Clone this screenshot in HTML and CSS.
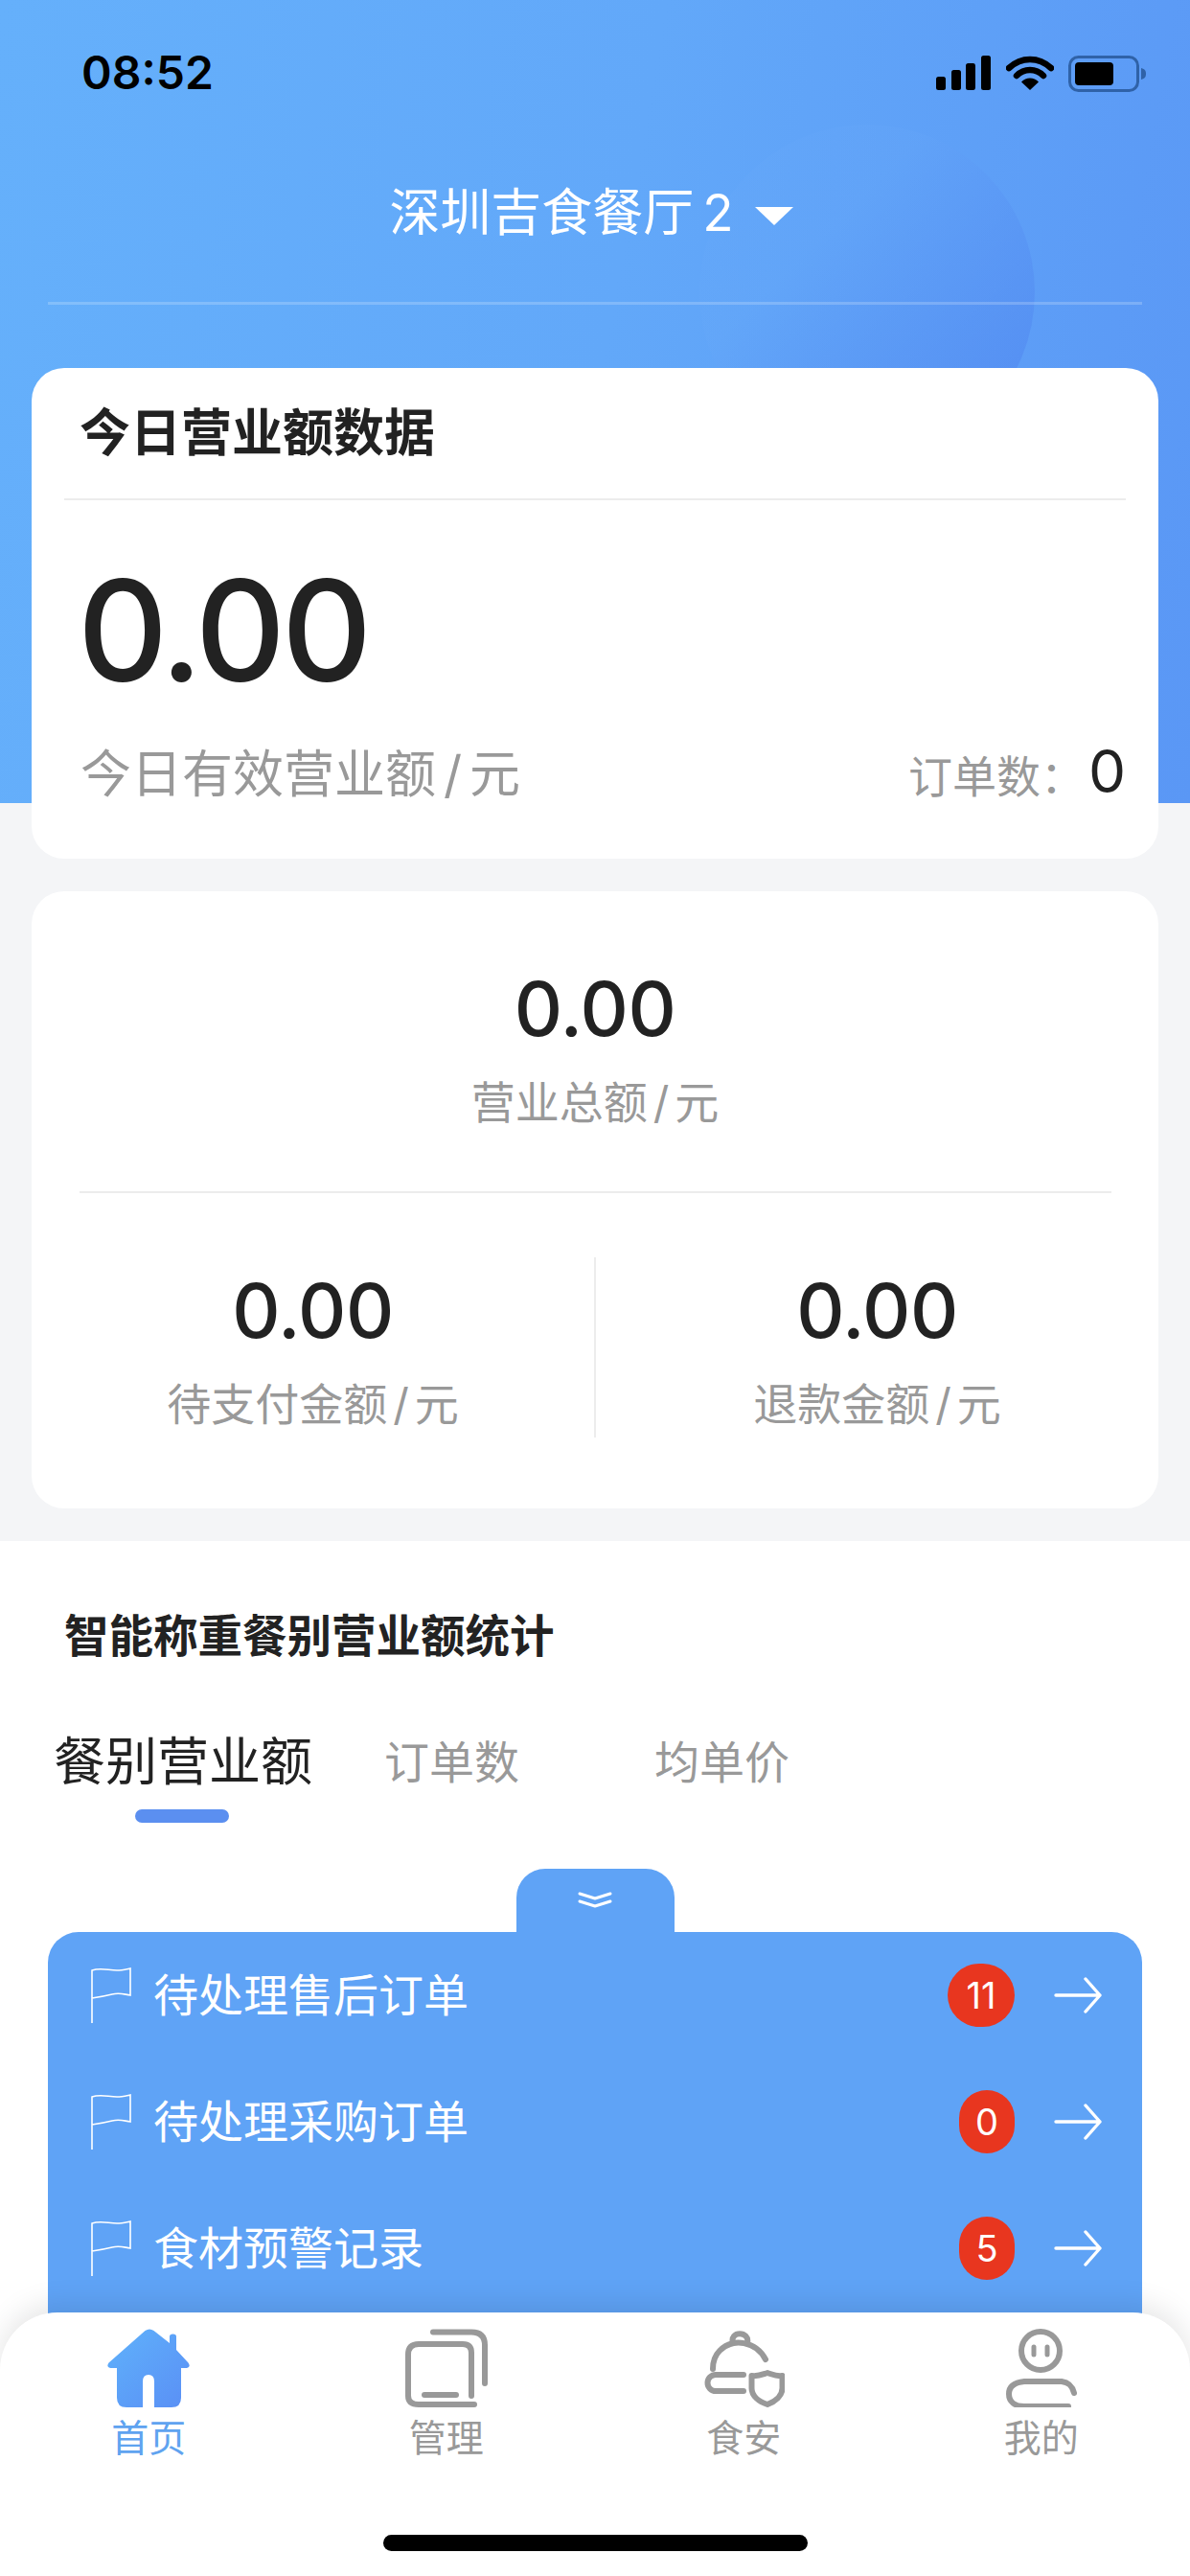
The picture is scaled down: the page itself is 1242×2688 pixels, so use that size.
FILE: index.html
```html
<!DOCTYPE html>
<html lang="zh-CN">
<head>
<meta charset="utf-8">
<title>今日营业额数据</title>
<link rel="stylesheet" href="styles.css">
</head>
<body>
<div class="page">
  <header class="hero">
    <div class="hero-blob"></div>
    <div class="status">
      <span class="time">08:52</span>
      <div class="status-icons">
        <svg class="i-signal" width="58" height="36" viewBox="0 0 58 36"><rect x="0" y="22" width="10" height="14" rx="2.5"/><rect x="16" y="15" width="10" height="21" rx="2.5"/><rect x="31" y="8" width="10" height="28" rx="2.5"/><rect x="47" y="0" width="10" height="36" rx="2.5"/></svg>
        <svg class="i-wifi" width="50" height="36" viewBox="0 0 50 36"><path d="M3 13C16 1 34 1 47 13" fill="none" stroke="#000" stroke-width="6.5" stroke-linecap="round"/><path d="M11 21C19 13 31 13 39 21" fill="none" stroke="#000" stroke-width="6.5" stroke-linecap="round"/><path d="M16 27.5C21 22 29 22 34 27.5L25 36Z"/></svg>
        <svg class="i-batt" width="82" height="38" viewBox="0 0 82 38"><rect x="1.5" y="1.5" width="71" height="35" rx="9" fill="none" stroke="#2f62a8" stroke-width="3"/><rect x="7" y="7" width="40" height="24" rx="4"/><path d="M76 13C80 14 81 16 81 19C81 22 80 24 76 25Z" fill="#2f62a8"/></svg>
      </div>
    </div>
    <div class="store"><span class="store-name">深圳吉食餐厅 2</span><i class="caret"></i></div>
    <div class="hero-line"></div>
  </header>

  <main class="cards">
    <section class="card today">
      <h2 class="today-title">今日营业额数据</h2>
      <div class="today-rule"></div>
      <div class="today-amount">0.00</div>
      <div class="today-foot">
        <span class="today-label">今日有效营业额<i class="slash">/</i>元</span>
        <span class="today-orders"><span class="orders-label">订单数：</span><b class="orders-num">0</b></span>
      </div>
    </section>

    <section class="card totals">
      <div class="stat stat-top">
        <div class="stat-num">0.00</div>
        <div class="stat-label">营业总额<i class="slash">/</i>元</div>
      </div>
      <div class="totals-rule"></div>
      <div class="totals-row">
        <div class="stat">
          <div class="stat-num">0.00</div>
          <div class="stat-label">待支付金额<i class="slash">/</i>元</div>
        </div>
        <div class="totals-vline"></div>
        <div class="stat">
          <div class="stat-num">0.00</div>
          <div class="stat-label">退款金额<i class="slash">/</i>元</div>
        </div>
      </div>
    </section>
  </main>

  <section class="stats">
    <h3 class="stats-title">智能称重餐别营业额统计</h3>
    <div class="tabs">
      <div class="tab tab-on">餐别营业额</div>
      <div class="tab tab-2">订单数</div>
      <div class="tab tab-3">均单价</div>
    </div>
    <div class="handle">
      <svg width="36" height="17" viewBox="0 0 36 17"><path d="M2 2L18 7L34 2M2 10L18 15L34 10" fill="none" stroke="#fff" stroke-width="3" stroke-linecap="round" stroke-linejoin="round"/></svg>
    </div>
    <div class="todo">
      <div class="todo-row">
        <svg class="flag" width="42" height="58" viewBox="0 0 42 58"><path d="M1 58V3C10 0 18 3 27 3C32 3 36 2 41 1V29C34 28 30 26 22 28C14 30 8 31 1 32" fill="none" stroke="#fff" stroke-width="1.6"/></svg>
        <span class="todo-text">待处理售后订单</span>
        <b class="badge badge-wide">11</b>
        <svg class="arrow" width="50" height="38" viewBox="0 0 50 38"><path d="M2 19H48M33 2L48 19L33 36" fill="none" stroke="#fff" stroke-width="3.4" stroke-linecap="round" stroke-linejoin="round"/></svg>
      </div>
      <div class="todo-row">
        <svg class="flag" width="42" height="58" viewBox="0 0 42 58"><path d="M1 58V3C10 0 18 3 27 3C32 3 36 2 41 1V29C34 28 30 26 22 28C14 30 8 31 1 32" fill="none" stroke="#fff" stroke-width="1.6"/></svg>
        <span class="todo-text">待处理采购订单</span>
        <b class="badge">0</b>
        <svg class="arrow" width="50" height="38" viewBox="0 0 50 38"><path d="M2 19H48M33 2L48 19L33 36" fill="none" stroke="#fff" stroke-width="3.4" stroke-linecap="round" stroke-linejoin="round"/></svg>
      </div>
      <div class="todo-row">
        <svg class="flag" width="42" height="58" viewBox="0 0 42 58"><path d="M1 58V3C10 0 18 3 27 3C32 3 36 2 41 1V29C34 28 30 26 22 28C14 30 8 31 1 32" fill="none" stroke="#fff" stroke-width="1.6"/></svg>
        <span class="todo-text">食材预警记录</span>
        <b class="badge">5</b>
        <svg class="arrow" width="50" height="38" viewBox="0 0 50 38"><path d="M2 19H48M33 2L48 19L33 36" fill="none" stroke="#fff" stroke-width="3.4" stroke-linecap="round" stroke-linejoin="round"/></svg>
      </div>
    </div>
  </section>

  <nav class="tabbar">
    <div class="nav-items">
      <div class="nav-item nav-on">
        <svg width="86" height="82" viewBox="0 0 86 82"><defs><linearGradient id="home" x1="0" y1="0" x2="1" y2="1"><stop offset="0" stop-color="#5fb2fb"/><stop offset="1" stop-color="#5a8ff5"/></linearGradient></defs><path d="M39.500 2Q44 -1 48.500 2L65 15V8Q65 5.500 68.500 5.500Q72 5.500 72 8V22L84.500 35.500Q87.500 40 83 41H77V72Q77 82 67 82H49V55Q49 48 43 48Q37 48 37 55V82H20Q10 82 10 72V41H3Q-1.500 40 1.500 35.500Z" fill="url(#home)"/></svg>
        <span>首页</span>
      </div>
      <div class="nav-item">
        <svg class="line-icon" width="86" height="82" viewBox="0 0 86 82"><path d="M29 3.500H69Q83 3.500 83 17V57"/><path d="M69 70V25Q69 16 60 16H14Q3 16 3 27V70Q3 79 14 79H72"/><path d="M20 69H53"/></svg>
        <span>管理</span>
      </div>
      <div class="nav-item">
        <svg class="line-icon" width="86" height="82" viewBox="0 0 86 82"><path d="M32 15C28 2 50 2 47 15"/><path d="M66 32C56 13 32 9 18 23C12 29 11 35 11 42"/><path d="M43 48H14A8.500 8.500 0 0 0 14 65H43"/><path d="M51.500 49C58 50 62 48 68 46C74 48 78 50 83.500 49V62C83.500 70 76 76 68 79C59 76 51.500 70 51.500 62Z"/></svg>
        <span>食安</span>
      </div>
      <div class="nav-item">
        <svg class="line-icon" width="74" height="82" viewBox="0 0 74 82"><circle cx="36" cy="23" r="20"/><path d="M29 19V27M43 19V27" stroke-width="5"/><path d="M71 67C69 59 65 56 58 55H19C9 56 3 60 3 68C3 76 9 81 19 81H65"/></svg>
        <span>我的</span>
      </div>
    </div>
    <div class="home-bar"></div>
  </nav>
</div>
</body>
</html>
```

FILE: styles.css
```css
* { box-sizing: border-box; }
html, body { margin: 0; padding: 0; }
body {
  width: 1242px;
  height: 2688px;
  overflow: hidden;
  font-family: Inter, "Noto Sans CJK SC", sans-serif;
  color: #222;
}
h2, h3 { margin: 0; }

.page {
  position: relative;
  width: 1242px;
  height: 2688px;
  overflow: hidden;
  background: #f4f5f7;
  display: flex;
  flex-direction: column;
}

/* Hero */
.hero {
  position: relative;
  height: 838px;
  flex: none;
  overflow: hidden;
  background: linear-gradient(100deg, #65b0fb 0%, #62a8f9 50%, #5a97f5 100%);
}
.hero-blob {
  position: absolute;
  left: 730px;
  top: 130px;
  width: 350px;
  height: 350px;
  border-radius: 50%;
  background: linear-gradient(135deg, rgba(110, 172, 250, .12) 35%, rgba(80, 135, 240, .6) 88%);
}
.status {
  position: relative;
  height: 150px;
  padding: 49px 44px 0 85px;
  display: flex;
  justify-content: space-between;
  align-items: flex-start;
}
.time {
  font-size: 48px;
  line-height: 54px;
  font-weight: 600;
  color: #000;
}
.status-icons { display: flex; align-items: flex-start; gap: 15px; padding-top: 9px; margin-right: 1px; }
.store {
  position: relative;
  height: 165px;
  padding: 42px 8px 0 0;
  display: flex;
  justify-content: center;
  align-items: flex-start;
  gap: 22px;
  color: #fff;
  font-size: 53px;
  line-height: 60px;
}
.store-name { word-spacing: -6px; }
.caret {
  margin-top: 24px;
  width: 0;
  height: 0;
  border-left: 20px solid transparent;
  border-right: 20px solid transparent;
  border-top: 19px solid #fff;
}
.hero-line {
  position: relative;
  height: 3px;
  margin: 0 50px;
  background: rgba(255, 255, 255, .2);
}

/* Cards */
.cards {
  position: relative;
  flex: none;
  margin-top: -454px;
  padding: 0 33px;
  display: flex;
  flex-direction: column;
  gap: 34px;
}
.card { background: #fff; border-radius: 34px; }
.today { height: 512px; }
.today-title {
  height: 136px;
  padding: 38px 0 0 50px;
  font-size: 53px;
  line-height: 60px;
  font-weight: 700;
  color: #222;
}
.today-rule { height: 2px; margin: 0 34px; background: #ececec; }
.today-amount {
  margin-top: 61px;
  padding-left: 48px;
  font-size: 146px;
  letter-spacing: -4px;
  line-height: 150px;
  font-weight: 500;
  color: #222;
}
.today-foot {
  margin-top: 34px;
  padding: 0 34px 0 51px;
  display: flex;
  justify-content: space-between;
  align-items: baseline;
}
.today-label { font-size: 53px; line-height: 60px; color: #999; }
.today-label .slash { margin: 0 8px; }
.slash { font-style: normal; margin: 0 6px; }
.orders-label { font-size: 46px; color: #999; }
.orders-num { font-size: 62px; font-weight: 400; color: #222; margin-left: 4px; }

.totals { height: 644px; }
.stat { text-align: center; flex: 1; }
.stat-top { height: 313px; padding-top: 78px; }
.stat-num { font-size: 78px; letter-spacing: -.5px; line-height: 90px; font-weight: 500; color: #222; }
.stat-label { margin-top: 24px; font-size: 46px; line-height: 56px; color: #999; }
.totals-rule { height: 2px; margin: 0 49px 0 50px; background: #ececec; }
.totals-row {
  display: flex;
  align-items: flex-start;
  padding-top: 67px;
}
.totals-row .stat { padding-top: 11px; }
.totals-vline { width: 2px; height: 188px; background: #ececec; flex: none; }

/* Stats section */
.stats {
  flex: 1;
  margin-top: 34px;
  background: #fff;
  display: flex;
  flex-direction: column;
}
.stats-title {
  margin: 72px 0 0 67px;
  font-size: 46.500px;
  line-height: 54px;
  font-weight: 700;
  color: #222;
}
.tabs {
  position: relative;
  margin-top: 75px;
  height: 141px;
  display: flex;
  align-items: flex-start;
  color: #999;
  font-size: 47px;
  line-height: 60px;
}
.tab { flex: none; white-space: nowrap; }
.tab-on {
  position: relative;
  margin-left: 56px;
  font-size: 54px;
  color: #222;
}
.tab-on::after {
  content: "";
  position: absolute;
  left: 85px;
  top: 79px;
  width: 98px;
  height: 14px;
  border-radius: 7px;
  background: #5b8ff0;
}
.tab-2 { margin-left: 75px; }
.tab-3 { margin-left: 141px; }

.handle {
  margin: 0 auto;
  width: 165px;
  height: 66px;
  padding-top: 24px;
  background: #5fa3f6;
  border-radius: 30px 30px 0 0;
  display: flex;
  justify-content: center;
  align-items: flex-start;
}
.todo {
  flex: 1;
  margin: 0 50px;
  background: #5fa3f6;
  border-radius: 32px 32px 0 0;
}
.todo-row {
  height: 132px;
  padding: 0 42px 0 45px;
  display: flex;
  align-items: center;
  color: #fff;
}
.flag { flex: none; }
.todo-text { margin-left: 23px; font-size: 47px; line-height: 56px; flex: 1; }
.badge {
  flex: none;
  width: 58px;
  height: 66px;
  border-radius: 33px;
  background: #e8361f;
  font-size: 38px;
  line-height: 66px;
  font-weight: 400;
  text-align: center;
  color: #fff;
}
.badge-wide { width: 70px; }
.arrow { flex: none; margin-left: 41px; }

/* Tab bar */
.tabbar {
  position: absolute;
  left: 0;
  right: 0;
  bottom: 0;
  height: 275px;
  background: #fff;
  border-radius: 60px 60px 0 0;
  box-shadow: 0 -8px 30px rgba(0, 0, 0, .1);
}
.nav-items {
  display: flex;
  padding-top: 17px;
}
.nav-item {
  flex: 1;
  display: flex;
  flex-direction: column;
  align-items: center;
  font-size: 39px;
  line-height: 46px;
  color: #999;
}
.nav-item svg { display: block; }
.nav-item span { margin-top: 9px; }
.nav-on { color: #5fa3f0; }
.line-icon {
  fill: none;
  stroke: #999;
  stroke-width: 6;
  stroke-linecap: round;
  stroke-linejoin: round;
}
.home-bar {
  position: absolute;
  left: 400px;
  top: 232px;
  width: 443px;
  height: 17px;
  border-radius: 9px;
  background: #000;
}
```
